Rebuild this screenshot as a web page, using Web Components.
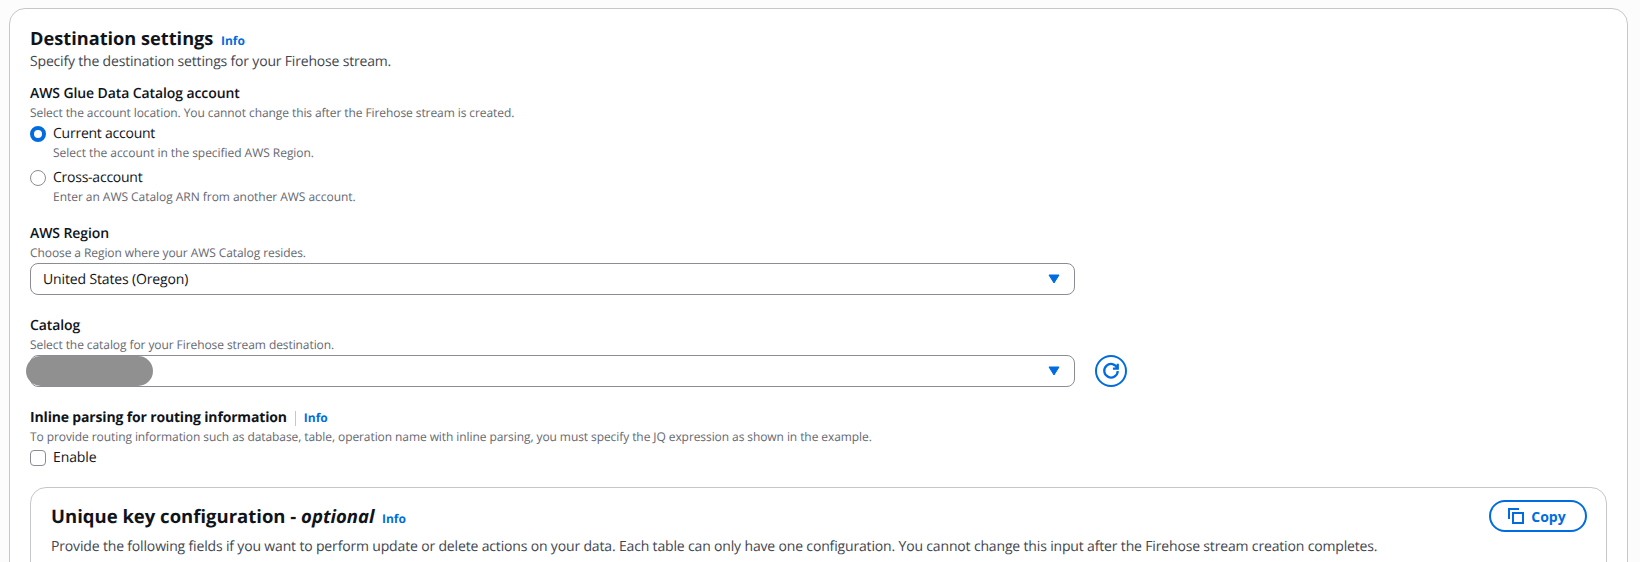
<!DOCTYPE html>
<html>
<head>
<meta charset="utf-8">
<style>
  html, body { margin: 0; height: 562px; overflow: hidden; background: #fcfcfc; }
  body { padding: 8px 12px 0 9px; box-sizing: border-box; font-family: "Open Sans", "Noto Sans", sans-serif; color: #0f141a; text-rendering: geometricPrecision; }
</style>
</head>
<body>
<ui-card>
  <ui-header size="18.2" slot="header">Destination settings</ui-header>
  <div slot="desc">Specify the destination settings for your Firehose stream.</div>

  <ui-field label="AWS Glue Data Catalog account" hint="Select the account location. You cannot change this after the Firehose stream is created." style="margin-top:12px">
    <ui-radio checked label="Current account" hint="Select the account in the specified AWS Region."></ui-radio>
    <ui-radio label="Cross-account" hint="Enter an AWS Catalog ARN from another AWS account."></ui-radio>
  </ui-field>

  <ui-field label="AWS Region" hint="Choose a Region where your AWS Catalog resides." style="margin-top:19px">
    <ui-select value="United States (Oregon)"></ui-select>
  </ui-field>

  <ui-field label="Catalog" hint="Select the catalog for your Firehose stream destination." style="margin-top:20.5px">
    <ui-select redacted refresh></ui-select>
  </ui-field>

  <ui-field label="Inline parsing for routing information" info hint="To provide routing information such as database, table, operation name with inline parsing, you must specify the JQ expression as shown in the example." style="margin-top:21px">
    <ui-checkbox label="Enable"></ui-checkbox>
  </ui-field>

  <ui-panel>
    <ui-header size="18.5" slot="header">Unique key configuration - <i>optional</i></ui-header>
    <ui-copy slot="action"></ui-copy>
    <div slot="desc">Provide the following fields if you want to perform update or delete actions on your data. Each table can only have one configuration. You cannot change this input after the Firehose stream creation completes.</div>
  </ui-panel>
</ui-card>

<template id="card-tpl">
  <style>
    :host { display: block; background: #fff; border: 1px solid #c6c6cd; border-radius: 16px; padding: 16.5px 20px 40px 20px; height: 700px; }
    .desc { font-size: 14px; line-height: 20px; color: #424650; letter-spacing: -0.18px; }
  </style>
  <slot name="header"></slot>
  <div class="desc"><slot name="desc"></slot></div>
  <slot></slot>
</template>

<template id="panel-tpl">
  <style>
    :host { display: block; margin-top: 18.5px; background: #fff; border: 1px solid #c6c6cd; border-radius: 16px; padding: 16px 19px 40px 20px; height: 300px; letter-spacing: 0; }
    .top { display: flex; justify-content: space-between; align-items: flex-start; }
    .desc { font-size: 14px; line-height: 20px; color: #424650; margin-top: 5px; letter-spacing: -0.16px; }
  </style>
  <div class="top"><slot name="header"></slot><slot name="action"></slot></div>
  <div class="desc"><slot name="desc"></slot></div>
</template>

<script>
const BLUE = '#006ce0';

class UiInfo extends HTMLElement {
  constructor() {
    super();
    this.attachShadow({mode: 'open'}).innerHTML = `
      <style>
        :host { display: inline-block; font-size: 12px; line-height: 16px; font-weight: 700; color: ${BLUE}; }
      </style>Info`;
  }
}
customElements.define('ui-info', UiInfo);

class UiCard extends HTMLElement {
  constructor() {
    super();
    this.attachShadow({mode: 'open'}).appendChild(document.getElementById('card-tpl').content.cloneNode(true));
  }
}
customElements.define('ui-card', UiCard);

class UiPanel extends HTMLElement {
  constructor() {
    super();
    this.attachShadow({mode: 'open'}).appendChild(document.getElementById('panel-tpl').content.cloneNode(true));
  }
}
customElements.define('ui-panel', UiPanel);

class UiHeader extends HTMLElement {
  constructor() {
    super();
    const size = this.getAttribute('size') || 18;
    this.attachShadow({mode: 'open'}).innerHTML = `
      <style>
        :host { display: flex; align-items: baseline; gap: 7.5px; }
        h2 { margin: 0; font-size: ${size}px; line-height: 26px; font-weight: 700; color: #0f141a; }
      </style>
      <h2><slot></slot></h2><ui-info></ui-info>`;
  }
}
customElements.define('ui-header', UiHeader);

class UiField extends HTMLElement {
  constructor() {
    super();
    const hasInfo = this.hasAttribute('info');
    const info = hasInfo ? '<span class="sep"></span><ui-info></ui-info>' : '';
    this.attachShadow({mode: 'open'}).innerHTML = `
      <style>
        :host { display: block; }
        .label { display: flex; align-items: center; font-size: 14px; line-height: 20px; color: #0f141a;
                 font-weight: ${hasInfo ? 700 : 600}; letter-spacing: ${hasInfo ? '-0.16px' : '-0.1px'}; }
        .sep { width: 1px; height: 15px; background: #c6c6cd; margin: 0 8px 0 8px; }
        ui-info { letter-spacing: 0; }
        .hint { font-size: 12px; line-height: 16px; color: #656871; margin-top: 1px; margin-bottom: 3px; letter-spacing: -0.08px; }
      </style>
      <div class="label"><span></span>${info}</div>
      <div class="hint"></div>
      <slot></slot>`;
    this.shadowRoot.querySelector('.label span').textContent = this.getAttribute('label');
    this.shadowRoot.querySelector('.hint').textContent = this.getAttribute('hint');
  }
}
customElements.define('ui-field', UiField);

class UiRadio extends HTMLElement {
  constructor() {
    super();
    const on = this.hasAttribute('checked');
    this.attachShadow({mode: 'open'}).innerHTML = `
      <style>
        :host { display: grid; grid-template-columns: 16px 1fr; column-gap: 7px; margin-bottom: 7px; }
        .dot { box-sizing: border-box; width: 16px; height: 16px; margin-top: 2px; border-radius: 50%;
               border: ${on ? '4px solid ' + BLUE : '1px solid #8c8c94'}; background: #fff; }
        .label { font-size: 14px; line-height: 20px; color: #0f141a; letter-spacing: -0.24px; }
        .hint { grid-column: 2; font-size: 12px; line-height: 16px; color: #656871; margin-top: 1px; letter-spacing: -0.04px; }
      </style>
      <div class="dot"></div><div class="label"></div><div class="hint"></div>`;
    this.shadowRoot.querySelector('.label').textContent = this.getAttribute('label');
    this.shadowRoot.querySelector('.hint').textContent = this.getAttribute('hint');
  }
}
customElements.define('ui-radio', UiRadio);

class UiCheckbox extends HTMLElement {
  constructor() {
    super();
    this.attachShadow({mode: 'open'}).innerHTML = `
      <style>
        :host { display: flex; gap: 7px; align-items: flex-start; }
        .box { box-sizing: border-box; width: 16px; height: 16px; margin-top: 2px; border: 1px solid #8c8c94; border-radius: 4px; background: #fff; }
        .label { font-size: 14px; line-height: 20px; color: #0f141a; letter-spacing: -0.1px; }
      </style>
      <div class="box"></div><div class="label"></div>`;
    this.shadowRoot.querySelector('.label').textContent = this.getAttribute('label');
  }
}
customElements.define('ui-checkbox', UiCheckbox);

class UiSelect extends HTMLElement {
  constructor() {
    super();
    const refresh = this.hasAttribute('refresh') ? `
      <button class="refresh" aria-label="Refresh">
        <svg width="18" height="18" viewBox="0 0 16 16" fill="none" stroke="${BLUE}" stroke-width="2">
          <path d="M13.6 5.6A6 6 0 1 0 14 8"/>
          <path d="M14 1.5V5.8H9.7"/>
        </svg>
      </button>` : '';
    const redacted = this.hasAttribute('redacted') ? '<div class="redact"></div>' : '';
    this.attachShadow({mode: 'open'}).innerHTML = `
      <style>
        :host { display: flex; gap: 20px; align-items: center; margin-top: -0.5px; }
        .box { position: relative; box-sizing: border-box; width: 1045px; height: 32px; padding: 0 12px;
               display: flex; align-items: center; justify-content: space-between;
               border: 1px solid #8c8c94; border-radius: 8px; background: #fff;
               font-size: 14px; color: #0f141a; letter-spacing: -0.14px; }
        .box svg { position: absolute; right: 14px; top: 10px; }
        .redact { position: absolute; left: -5px; top: 0; width: 127px; height: 30px; background: #909090; border-radius: 15px; }
        .refresh { box-sizing: border-box; width: 32px; height: 32px; padding: 0; border: 2px solid ${BLUE}; border-radius: 50%;
                   background: #fff; display: flex; align-items: center; justify-content: center; }
      </style>
      <div class="box"><span class="value"></span>
        <svg width="12" height="10" viewBox="0 0 12 10"><path d="M1 1h10L6 9z" fill="${BLUE}" stroke="${BLUE}" stroke-linejoin="round"/></svg>
        ${redacted}
      </div>${refresh}`;
    this.shadowRoot.querySelector('.value').textContent = this.getAttribute('value') || '';
  }
}
customElements.define('ui-select', UiSelect);

class UiCopy extends HTMLElement {
  constructor() {
    super();
    this.attachShadow({mode: 'open'}).innerHTML = `
      <style>
        :host { display: block; margin-top: -3.5px; }
        button { box-sizing: border-box; width: 98px; height: 32px; display: flex; align-items: center; justify-content: center; gap: 7px;
                 border: 2px solid ${BLUE}; border-radius: 16px; background: #fff; color: ${BLUE}; padding: 0 2px 0 0;
                 font: 700 14px "Open Sans", "Noto Sans", sans-serif; }
      </style>
      <button>
        <svg width="16" height="16" viewBox="0 0 16 16" fill="none" stroke="${BLUE}" stroke-width="2">
          <path d="M1 11V1H11"/><rect x="5" y="5" width="10" height="10"/>
        </svg>Copy</button>`;
  }
}
customElements.define('ui-copy', UiCopy);
</script>
</body>
</html>
